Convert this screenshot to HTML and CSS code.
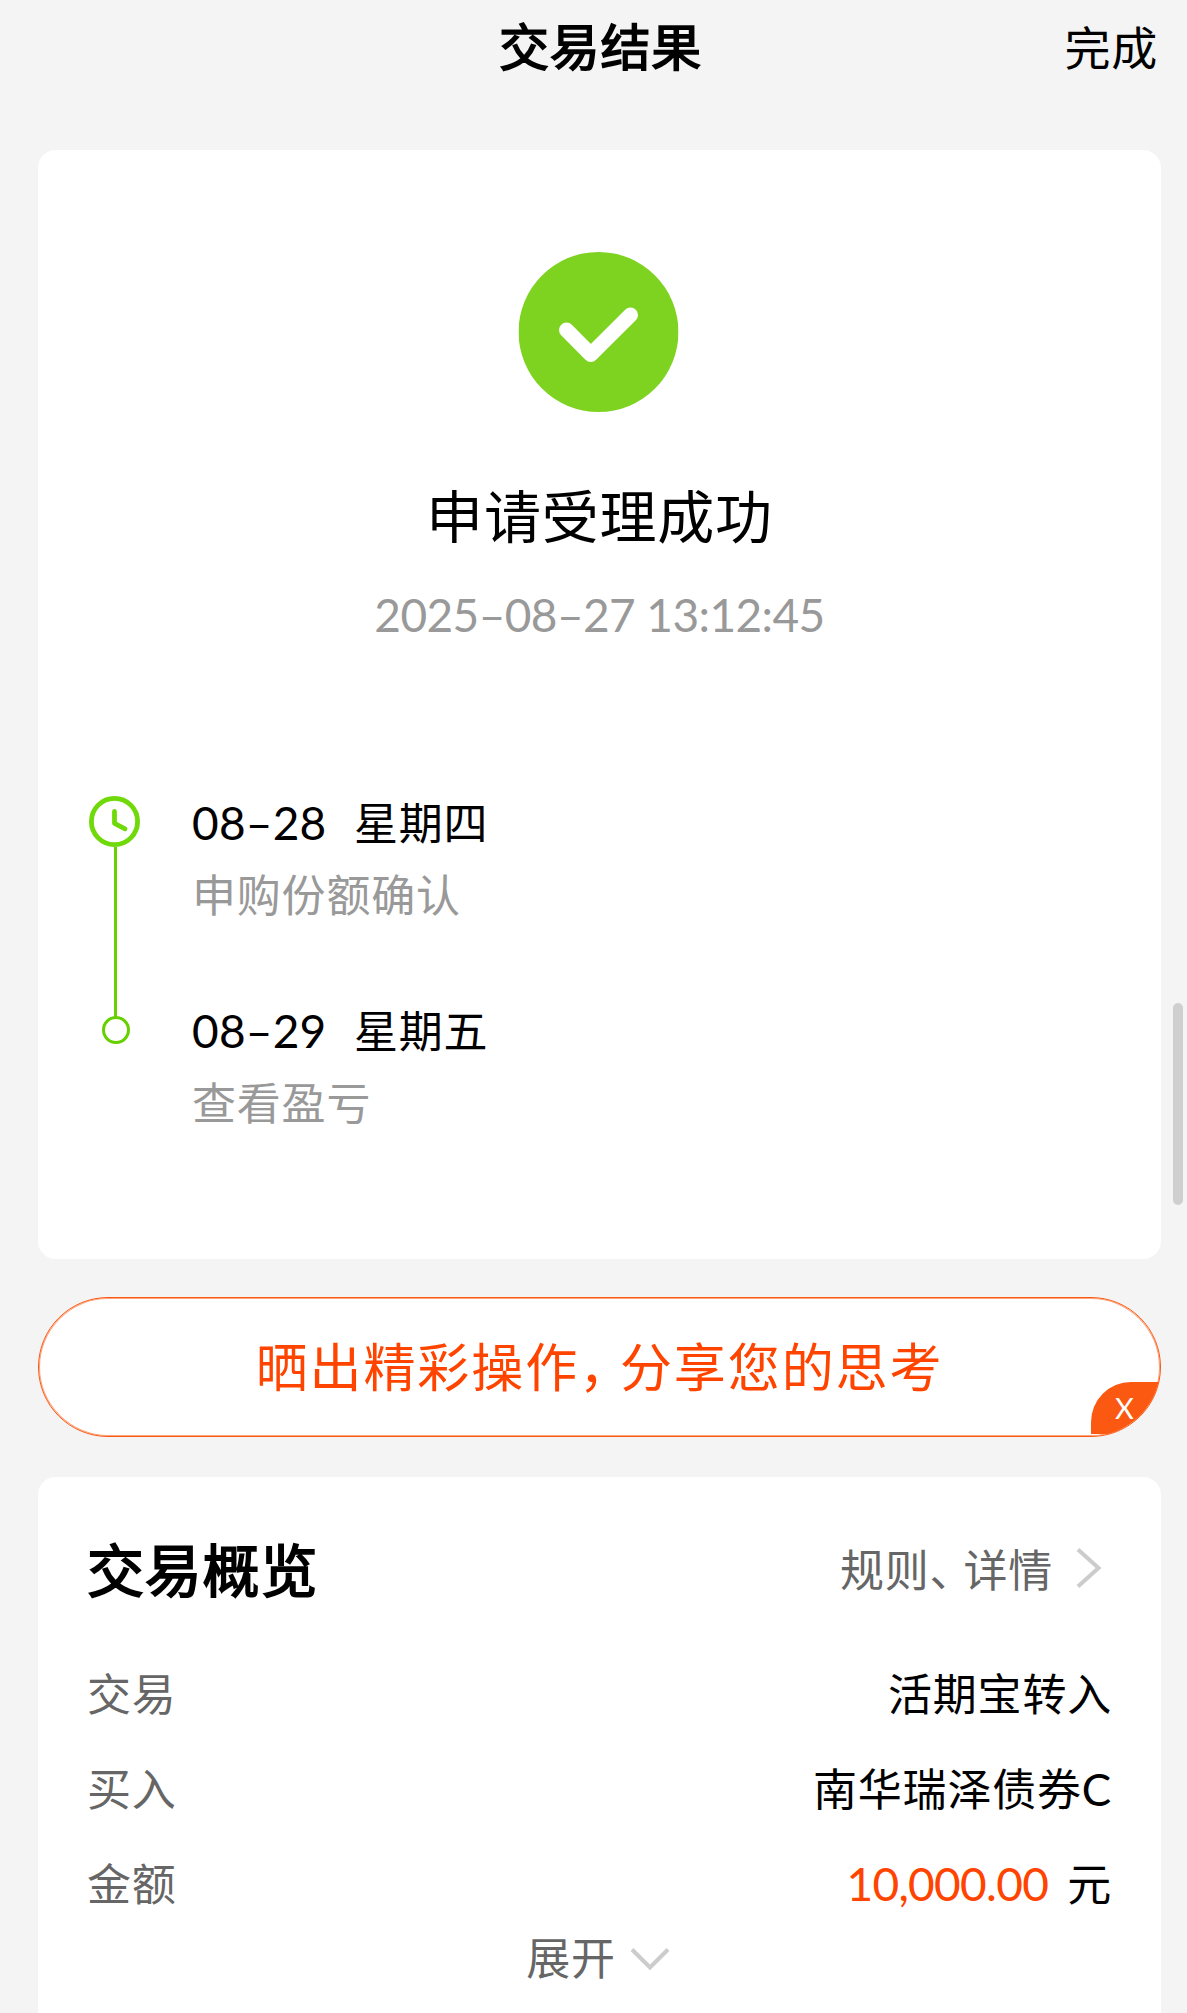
FILE: index.html
```html
<!DOCTYPE html>
<html lang="zh-CN">
<head>
    <meta charset="UTF-8">
    <meta name="viewport" content="width=device-width, initial-scale=1.0">
    <title>交易结果</title>
    <link rel="stylesheet" href="styles.css">
</head>
<body>

<div class="page">
    <header class="header">
        <h1>交易结果</h1>
        <a class="done">完成</a>
    </header>

    <!-- Result and timeline -->
    <section class="card result">
        <svg class="success-icon" viewBox="0 0 160 160">
            <circle cx="80" cy="80" r="80" fill="#7ed321"/>
            <path d="M48 78 L72.3 102.5 L112 63" fill="none" stroke="#fff" stroke-width="15" stroke-linecap="round" stroke-linejoin="round"/>
        </svg>
        <h2>申请受理成功</h2>
        <p class="time">2025–08–27 13:12:45</p>

        <div class="timeline">
            <div class="step">
                <div class="marker">
                    <svg class="clock" viewBox="0 0 51 51">
                        <circle cx="25.5" cy="25.5" r="23.1" fill="none" stroke="#70d90a" stroke-width="4.8"/>
                        <path d="M25.5 15.5 V27.3 L36 32.8" fill="none" stroke="#70d90a" stroke-width="4.8" stroke-linecap="round" stroke-linejoin="round"/>
                    </svg>
                    <span class="line"></span>
                </div>
                <div class="step-text">
                    <p class="date"><span class="day">08–28</span><span>星期四</span></p>
                    <p class="desc">申购份额确认</p>
                </div>
            </div>
            <div class="step">
                <div class="marker">
                    <span class="dot"></span>
                </div>
                <div class="step-text">
                    <p class="date"><span class="day">08–29</span><span>星期五</span></p>
                    <p class="desc">查看盈亏</p>
                </div>
            </div>
        </div>
    </section>

    <!-- Share banner -->
    <div class="share">
        <span class="share-text">晒出精彩操作<span class="comma">，</span>分享您的思考</span>
        <span class="close">X</span>
    </div>

    <!-- Overview -->
    <section class="card overview">
        <div class="overview-head">
            <h2>交易概览</h2>
            <a class="rules">规则<span class="pause">、</span>详情
                <svg class="arrow-right" viewBox="0 0 26 42"><path d="M2 2.5 L22.5 21 L2 39.5" fill="none" stroke="#ccc" stroke-width="4"/></svg>
            </a>
        </div>
        <div class="row"><span class="label">交易</span><span class="value">活期宝转入</span></div>
        <div class="row"><span class="label">买入</span><span class="value">南华瑞泽债券C</span></div>
        <div class="row"><span class="label">金额</span><span class="value"><span class="amount">10,000.00</span>元</span></div>
        <div class="expand">展开
            <svg class="arrow-down" viewBox="0 0 40 24"><path d="M2 2.5 L20 20.5 L38 2.5" fill="none" stroke="#ccc" stroke-width="4"/></svg>
        </div>
    </section>
</div>

<div class="scrollbar"></div>

</body>
</html>
```

FILE: styles.css
```css
* { box-sizing: border-box; }
body { margin: 0; height: 2013px; overflow: hidden; background-color: #f4f4f4; color: #000; font-family: Lato, "Noto Sans CJK SC", sans-serif; font-size: 44px; letter-spacing: 0.8px; }
h1, h2, p { margin: 0; font-weight: normal; }
svg { display: block; flex: none; }

.page { padding: 0 26px 0 38px; }
.card { background-color: #fff; border-radius: 18px; }

.header { display: grid; grid-template-columns: 1fr auto 1fr; height: 150px; line-height: 95px; }
.header h1 { grid-column: 2; padding-left: 2px; font-size: 50px; -webkit-text-stroke: 1.6px #000; }
.done { justify-self: end; padding-right: 3px; font-size: 46px; }

.result { height: 1109px; padding-top: 102px; }
.success-icon { width: 160px; height: 160px; margin: 0 auto; transform: translateX(-1.5px); }
.result h2 { margin-top: 64px; font-size: 57px; line-height: 80px; text-align: center; }
.time { margin-top: 29px; font-size: 46px; letter-spacing: -0.6px; line-height: 60px; text-align: center; color: #999; }

.timeline { margin-top: 146px; padding-left: 51px; }
.step { display: flex; height: 208px; }
.marker { display: flex; flex-direction: column; align-items: center; width: 51px; padding-top: 5px; }
.clock { width: 51px; height: 51px; }
.line { flex: none; width: 3px; height: 170px; margin-left: 2px; background-color: #66d000; }
.dot { width: 28px; height: 28px; margin: 12px 0 0 2px; border: 3px solid #66d000; border-radius: 50%; }
.step-text { padding-left: 52px; }
.date { display: flex; line-height: 64px; }
.day { width: 162px; font-size: 46px; letter-spacing: 0.2px; }
.desc { line-height: 80px; color: #999; }

.share { position: relative; display: flex; align-items: center; justify-content: center; height: 140px; margin: 38px 0 40px; overflow: hidden; border: 1px solid #fb5911; border-radius: 70px; background-color: #fff; box-shadow: inset 0 0 0 1px #fca47c; color: #ff4400; }
.share-text { font-size: 52px; letter-spacing: 1.9px; line-height: 138px; }
.comma, .pause { font-feature-settings: "halt"; }
.comma { margin-right: 13px; }
.close { position: absolute; right: 0; bottom: 2px; width: 69px; height: 52px; padding-left: 24px; border-radius: 40px 0 0 0; background-color: #fb5911; color: #fff; font-size: 29px; line-height: 52px; }

.overview { height: 620px; padding: 54px 49px 0; }
.overview-head { display: flex; justify-content: space-between; height: 116px; line-height: 79px; }
.overview-head h2 { font-size: 57px; -webkit-text-stroke: 1.8px #000; }
.rules { display: flex; padding-right: 10px; color: #666; }
.pause { margin-right: 11px; }
.arrow-right { width: 26px; height: 42px; margin: 16px 0 0 23px; }
.row { display: flex; justify-content: space-between; height: 95px; line-height: 94px; }
.label { color: #666; }
.amount { margin-right: 19px; font-size: 46px; letter-spacing: -0.7px; color: #ff4400; }
.expand { display: flex; justify-content: center; height: 56px; padding-right: 3px; line-height: 52px; color: #666; }
.arrow-down { width: 40px; height: 24px; margin: 15px 0 0 14px; }

.scrollbar { position: absolute; top: 1003px; right: 4px; width: 10px; height: 202px; border-radius: 5px; background-color: #cfcfcf; }
```
